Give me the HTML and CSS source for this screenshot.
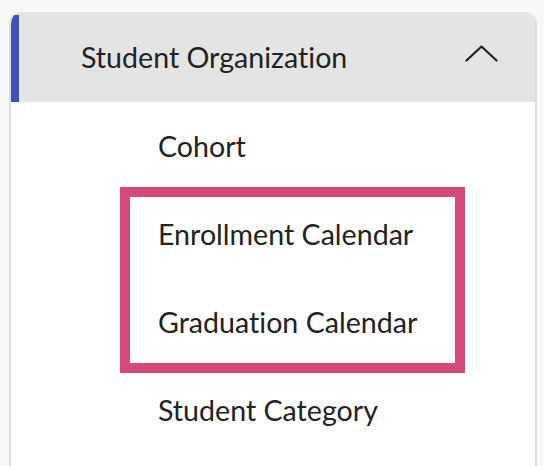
FILE: index.html
```html
<!DOCTYPE html>
<html lang="en">
<head>
<meta charset="utf-8">
<title>Student Organization</title>
<link rel="stylesheet" href="styles.css">
</head>
<body>
<div class="page">
  <section class="card">
    <header class="card-header">
      <span class="accent"></span>
      <span class="title">Student Organization</span>
      <svg class="chevron" width="33" height="17" viewBox="0 0 33 17" aria-hidden="true">
        <polyline points="1.5,15.5 16.5,1.5 31.5,15.5" fill="none" stroke="#222" stroke-width="2.2" stroke-linecap="round" stroke-linejoin="round"/>
      </svg>
    </header>
    <ul class="menu">
      <li class="item">Cohort</li>
      <li class="item">Enrollment Calendar</li>
      <li class="item">Graduation Calendar</li>
      <li class="item">Student Category</li>
      <li class="highlight" aria-hidden="true"></li>
    </ul>
  </section>
</div>
</body>
</html>
```
FILE: styles.css
```css
html, body {
  margin: 0;
  padding: 0;
  background: #f7f7f7;
  height: 100%;
  overflow: hidden;
}

.page {
  box-sizing: border-box;
  height: 100%;
  padding: 12px 7px 0 9px;
}

.card {
  box-sizing: border-box;
  height: 100%;
  background: #ffffff;
  border-left: 2px solid #dedede;
  border-right: 2px solid #dedede;
  border-radius: 12px 12px 0 0;
  overflow: hidden;
  font-family: "Lato", "Open Sans", sans-serif;
  font-variant-ligatures: none;
  color: #222222;
}

.card-header {
  position: relative;
  display: flex;
  align-items: center;
  height: 90px;
  background: #e4e4e4;
}

.accent {
  align-self: stretch;
  width: 8px;
  margin-top: 3px;
  background: #3f51b5;
}

.title {
  flex: 1;
  padding-left: 62px;
  font-size: 28.6px;
  line-height: 1;
}

.chevron {
  margin-right: 37px;
  margin-top: -8px;
}

.menu {
  position: relative;
  list-style: none;
  margin: 0;
  padding: 0;
}

.item {
  display: flex;
  align-items: center;
  height: 88px;
  padding-left: 147px;
  font-size: 28.6px;
  line-height: 1;
}

.highlight {
  position: absolute;
  left: 109px;
  top: 85px;
  width: 325px;
  height: 166px;
  border: 10px solid #d64a7a;
}
```
